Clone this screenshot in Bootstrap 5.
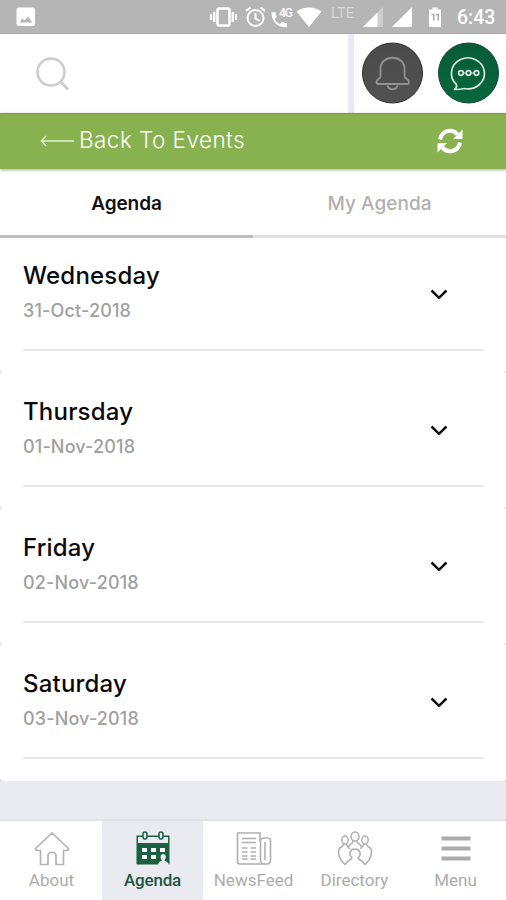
<!DOCTYPE html>
<html lang="en">
<head>
<meta charset="utf-8">
<meta name="viewport" content="width=device-width, initial-scale=1">
<title>Agenda</title>
<link href="https://cdn.jsdelivr.net/npm/bootstrap@5.3.0/dist/css/bootstrap.min.css" rel="stylesheet">
<style>
  body { font-family: Inter, "Liberation Sans", sans-serif; background: #e9ebf0; width: 506px; height: 900px; overflow: hidden; }
  svg { display: block; flex: none; }
  .status { height: 34px; background: #b5b5b5; border-bottom: 1px solid #aaa; font-family: Roboto, sans-serif; color: #fff; padding: 1px 11px 0 16px; }
  .lte { font-size: 14.5px; letter-spacing: .1px; color: #d6d6d6; width: 24px; line-height: 16px; margin: 0 8px 7px 9px; }
  .clock { font-size: 19.5px; font-weight: 500; letter-spacing: 0; line-height: 24px; margin: 2px 0 0 15px; width: 38px; }
  .topbar { height: 79px; background: #fff; }
  .search-box { width: 354px; border-right: 6px solid #eaebf1; padding-left: 35px; }
  .round-actions { gap: 15px; padding: 0 0 1px 8px; }
  .back-bar { height: 56px; background: #88b150; border-top: 1px solid #79a033; color: #fff; padding: 0 43px 1px 40px; box-shadow: 0 1px 3px rgba(0,0,0,.35); position: relative; }
  .back-text { font-size: 22.5px; font-weight: 300; letter-spacing: .45px; margin-left: 5px; line-height: 30px; padding-bottom: 2px; }
  .tabs { height: 69px; background: #fff; }
  .tab-cell { width: 50%; border-bottom: 3px solid #dfdfdf; color: #b0b0b0; font-weight: 500; font-size: 19px; letter-spacing: .05px; padding-top: 5px; }
  .tab-cell.on { border-color: #bdbdbd; color: #111; font-weight: 600; letter-spacing: -.1px; }
  .day { height: 136px; background: #fff; padding: 22px 22px 0 23px; }
  .day:first-child { height: 135px; padding-top: 21px; }
  .days { background: #c9c9cb; }
  .day { border-radius: 0 0 3px 3px; }
  .day-in { height: 92px; border-bottom: 2px solid #e8e8e8; padding-right: 36px; }
  .day h2 { font-size: 24px; font-weight: 500; letter-spacing: .2px; line-height: 34px; margin: 0; color: #0a0a0a; }
  .day p { font-size: 18px; font-weight: 500; letter-spacing: .15px; line-height: 24px; margin: 6px 0 0; color: #a0a0a0; }
  .chev { margin-top: 29px; }
  .spacer { height: 38px; }
  .bottom-nav { height: 81px; background: #fff; border-top: 2px solid #e0e1e7; font-family: Roboto, sans-serif; font-size: 17px; color: #acacac; padding-left: 1px; }
  .bottom-nav > a { color: inherit; text-decoration: none; flex: 1 1 0; padding-top: 10px; }
  .bottom-nav > a.on { background: #e9ebf0; color: #1e5540; font-weight: 500; letter-spacing: -.2px; }
  .bottom-nav span { line-height: 24px; margin-top: 1px; }
</style>
</head>
<body>
<div class="status d-flex align-items-center">
  <svg width="20" height="20" viewBox="0 0 20 20"><rect x=".5" y=".5" width="18.500" height="18.500" rx="2.500" fill="#fff"/><path d="M3.500 15.500l3-4 2 2 3.500-4 4.500 6z" fill="#b5b5b5"/></svg>
  <svg class="ms-auto" width="27" height="20" viewBox="0 0 27 20" fill="none" stroke="#fff"><rect x="7.500" y="1.500" width="12" height="17" rx="1.500" stroke-width="2.500"/><path d="M4.200 5v10M22.800 5v10" stroke-width="2.500"/><path d="M1 7v6M26 7v6" stroke-width="2"/></svg>
  <svg class="ms-2" width="21" height="22" viewBox="0 0 21 22" fill="none" stroke="#fff" stroke-width="2"><circle cx="10.500" cy="12" r="8"/><path d="M10.500 7v5.500l4 2.500M1 5l4.500-3.500M20 5l-4.500-3.500"/></svg>
  <svg width="26" height="24" viewBox="0 0 26 24" class="ms-1"><path d="M1.500 7h4l1.200 5-2 2c1 2.500 3 4 5 5l2.300-2 5 1.200v4C8 23.500 1 16 1.500 7z" fill="#fff"/><text x="9" y="12" font-family="Roboto" font-size="12" font-weight="500" fill="#fff" textLength="14">4G</text></svg>
  <svg width="26" height="20" viewBox="0 0 26 20"><path d="M.5 4.500C8-.8 18-.8 25.500 4.500L13 20z" fill="#fff"/></svg>
  <span class="lte">LTE</span>
  <svg width="20" height="20" viewBox="0 0 20 20"><path d="M0 20L20 0v20z" fill="#cecece"/><path d="M0 20L14.500 5.500V20z" fill="#fff"/></svg>
  <svg width="21" height="20" viewBox="0 0 21 20" class="ms-2"><path d="M1 20L21 0v20z" fill="#fff"/></svg>
  <svg width="14" height="20" viewBox="0 0 14 20" class="ms-3"><path d="M4.500 .5h5v2H13V20H1V2.500h3.500z" fill="#fff"/><path d="M3.500 7.500h2.300v6M8 7.500h2.300v6" fill="none" stroke="#aaa" stroke-width="1.500"/></svg>
  <span class="clock">6:43</span>
</div>
<header class="topbar d-flex">
  <div class="search-box d-flex align-items-center">
    <svg width="36" height="36" viewBox="0 0 36 36" fill="none" stroke="#cdcdcf"><circle cx="16" cy="16" r="13.500" stroke-width="2.600"/><path d="M25.500 25.500l7.500 8" stroke-width="3"/></svg>
  </div>
  <div class="round-actions d-flex align-items-center">
    <svg width="61" height="62" viewBox="0 0 61 62"><defs><linearGradient id="g1" x2="0" y2="1"><stop stop-color="#4b4b4b"/><stop offset="1" stop-color="#525252"/></linearGradient></defs><circle cx="30.500" cy="31" r="30" fill="url(#g1)" stroke="#303030"/><g fill="none" stroke="#929292" stroke-width="1.800" stroke-linejoin="round"><path d="M18.500 34V27c0-15 24-15 24 0v7c0 3 4.500 3 4.500 6q0 2-2 2H16.500q-2 0-2-2c0-3 4-3 4-6z"/><path d="M25.500 43.500c1 5 9 5 10 0"/></g></svg>
    <svg width="61" height="62" viewBox="0 0 61 62"><defs><linearGradient id="g2" x2="0" y2="1"><stop stop-color="#075c37"/><stop offset="1" stop-color="#07673c"/></linearGradient></defs><circle cx="30.500" cy="31" r="30" fill="url(#g2)" stroke="#144a32"/><g fill="none" stroke="#dbe9df" stroke-width="1.700" stroke-linejoin="round"><path d="M18.500 42.500A16.500 15.500 0 1 1 26.500 46.500C23 47.500 20 47.500 16.500 47.500c2-1.500 2.500-3 2-5z"/><circle cx="23" cy="31" r="2.300"/><circle cx="30.500" cy="31" r="2.300"/><circle cx="38.500" cy="31" r="2.300"/><path d="M25.300 31h2.900M32.800 31h3.400" stroke-width="1"/></g></svg>
  </div>
</header>
<div class="back-bar d-flex align-items-center">
  <svg width="34" height="12" viewBox="0 0 34 12" fill="none" stroke="#e4efd2" stroke-width="1.500"><path d="M34 6H1.500M6 1L1.500 6 6 11"/></svg>
  <span class="back-text">Back To Events</span>
  <svg class="ms-auto" width="26" height="26" viewBox="0 0 26 26" fill="none" stroke="#fff" stroke-width="4"><path d="M3 11.500C5 1.500 16 .5 20.500 6.500M23 14.500C21 24.500 10 25.500 5.500 19.500"/><path d="M25.500 1.500v9.500h-9.500zM.5 24.500V15H10z" fill="#fff" stroke="none"/></svg>
</div>
<div class="tabs d-flex text-center">
  <div class="tab-cell on d-flex align-items-center justify-content-center">Agenda</div>
  <div class="tab-cell d-flex align-items-center justify-content-center">My Agenda</div>
</div>
<main class="days">
  <section class="day"><div class="day-in d-flex justify-content-between"><div><h2>Wednesday</h2><p>31-Oct-2018</p></div><svg class="chev" width="18" height="12" viewBox="0 0 18 12" fill="none" stroke="#111" stroke-width="2.500"><path d="M1.500 2.500l7.500 7.300 7.500-7.300"/></svg></div></section>
  <section class="day"><div class="day-in d-flex justify-content-between"><div><h2>Thursday</h2><p>01-Nov-2018</p></div><svg class="chev" width="18" height="12" viewBox="0 0 18 12" fill="none" stroke="#111" stroke-width="2.500"><path d="M1.500 2.500l7.500 7.300 7.500-7.300"/></svg></div></section>
  <section class="day"><div class="day-in d-flex justify-content-between"><div><h2>Friday</h2><p>02-Nov-2018</p></div><svg class="chev" width="18" height="12" viewBox="0 0 18 12" fill="none" stroke="#111" stroke-width="2.500"><path d="M1.500 2.500l7.500 7.300 7.500-7.300"/></svg></div></section>
  <section class="day"><div class="day-in d-flex justify-content-between"><div><h2>Saturday</h2><p>03-Nov-2018</p></div><svg class="chev" width="18" height="12" viewBox="0 0 18 12" fill="none" stroke="#111" stroke-width="2.500"><path d="M1.500 2.500l7.500 7.300 7.500-7.300"/></svg></div></section>
</main>
<div class="spacer"></div>
<nav class="bottom-nav d-flex">
  <a href="#" class="d-flex flex-column align-items-center">
    <svg width="36" height="36" viewBox="0 0 36 36" fill="none" stroke="#b3b3b3" stroke-width="1.700" stroke-linejoin="round"><path d="M18 2L1.500 17.500q0 2 2 2H6.500V33.500h7.500V25c0-5 8-5 8 0v8.500h7.500V19.500h3q2 0 2-2z"/></svg>
    <span>About</span></a>
  <a href="#" class="on d-flex flex-column align-items-center">
    <svg width="36" height="36" viewBox="0 0 36 36"><path d="M1.500 4.500h33v29h-33z" fill="#1b6141"/><path d="M3 6h30v6H3z" fill="#e9ebf0"/><g fill="#e9ebf0" stroke="#1b6141" stroke-width="1.500"><rect x="8" y="1" width="4" height="7" rx="2"/><rect x="24" y="1" width="4" height="7" rx="2"/></g><path d="M7 17h5v4H7zM16 17h5v4h-5zM25 17h5v4h-5zM7 24h5v4H7zM16 24h5v4h-5z" fill="#fff"/><path d="M23 34c.5-3 2-3.500 4-4.500-2.500-3-1.500-6.500 1.200-6.500s3.700 3.500 1.300 6.500c2 1 3.500 1.500 4.500 4.500z" fill="#e9ebf0"/></svg>
    <span>Agenda</span></a>
  <a href="#" class="d-flex flex-column align-items-center">
    <svg width="36" height="36" viewBox="0 0 36 36" fill="none" stroke="#b0b0b0" stroke-width="1.600"><path d="M24 6V2H1.500v28.500q0 2.500 2.500 2.500h27q3.500 0 3.500-3.500V9q0-2-4-2h-2q-4 0-4 3v19q0 4 3.500 4M24 6v5M29 11v18M6 7.500h14M6 11.500h14M6 17h5.500M6 21h5.500M6 25h5.500M6 28h5.500M14.500 17H20M14.500 21H20M14.500 25H20M14.500 28H20"/></svg>
    <span>NewsFeed</span></a>
  <a href="#" class="d-flex flex-column align-items-center">
    <svg width="36" height="36" viewBox="0 0 36 36" fill="none" stroke="#b0b0b0" stroke-width="1.500" stroke-linejoin="round"><ellipse cx="18" cy="5.500" rx="4" ry="4.500"/><ellipse cx="8" cy="9" rx="3.200" ry="4"/><ellipse cx="28" cy="9" rx="3.200" ry="4"/><path d="M6.500 13c0 4-5 2-5 7 0 7 3 10 6.500 13.500l3-3.500c2-1 3-1.500 4-3-4-4-2-9 3-9s7 5 3 9c1 1.500 2 2 4 3l3 3.500c3.500-3.500 6.500-6.500 6.500-13.500 0-5-5-3-5-7M9.500 13c0 3 2 2.500 3 5M26.500 13c0 3-2 2.500-3 5M16 10c0 4-4 2-4.500 6M20 10c0 4 4 2 4.500 6"/></svg>
    <span>Directory</span></a>
  <a href="#" class="d-flex flex-column align-items-center">
    <svg width="36" height="36" viewBox="0 0 36 36" fill="none" stroke="#ababab" stroke-width="4"><path d="M3.500 7.500h29M3.500 17.500h29M3.500 27.500h29"/></svg>
    <span>Menu</span></a>
</nav>
<script src="https://cdn.jsdelivr.net/npm/bootstrap@5.3.0/dist/js/bootstrap.bundle.min.js"></script>
</body>
</html>
